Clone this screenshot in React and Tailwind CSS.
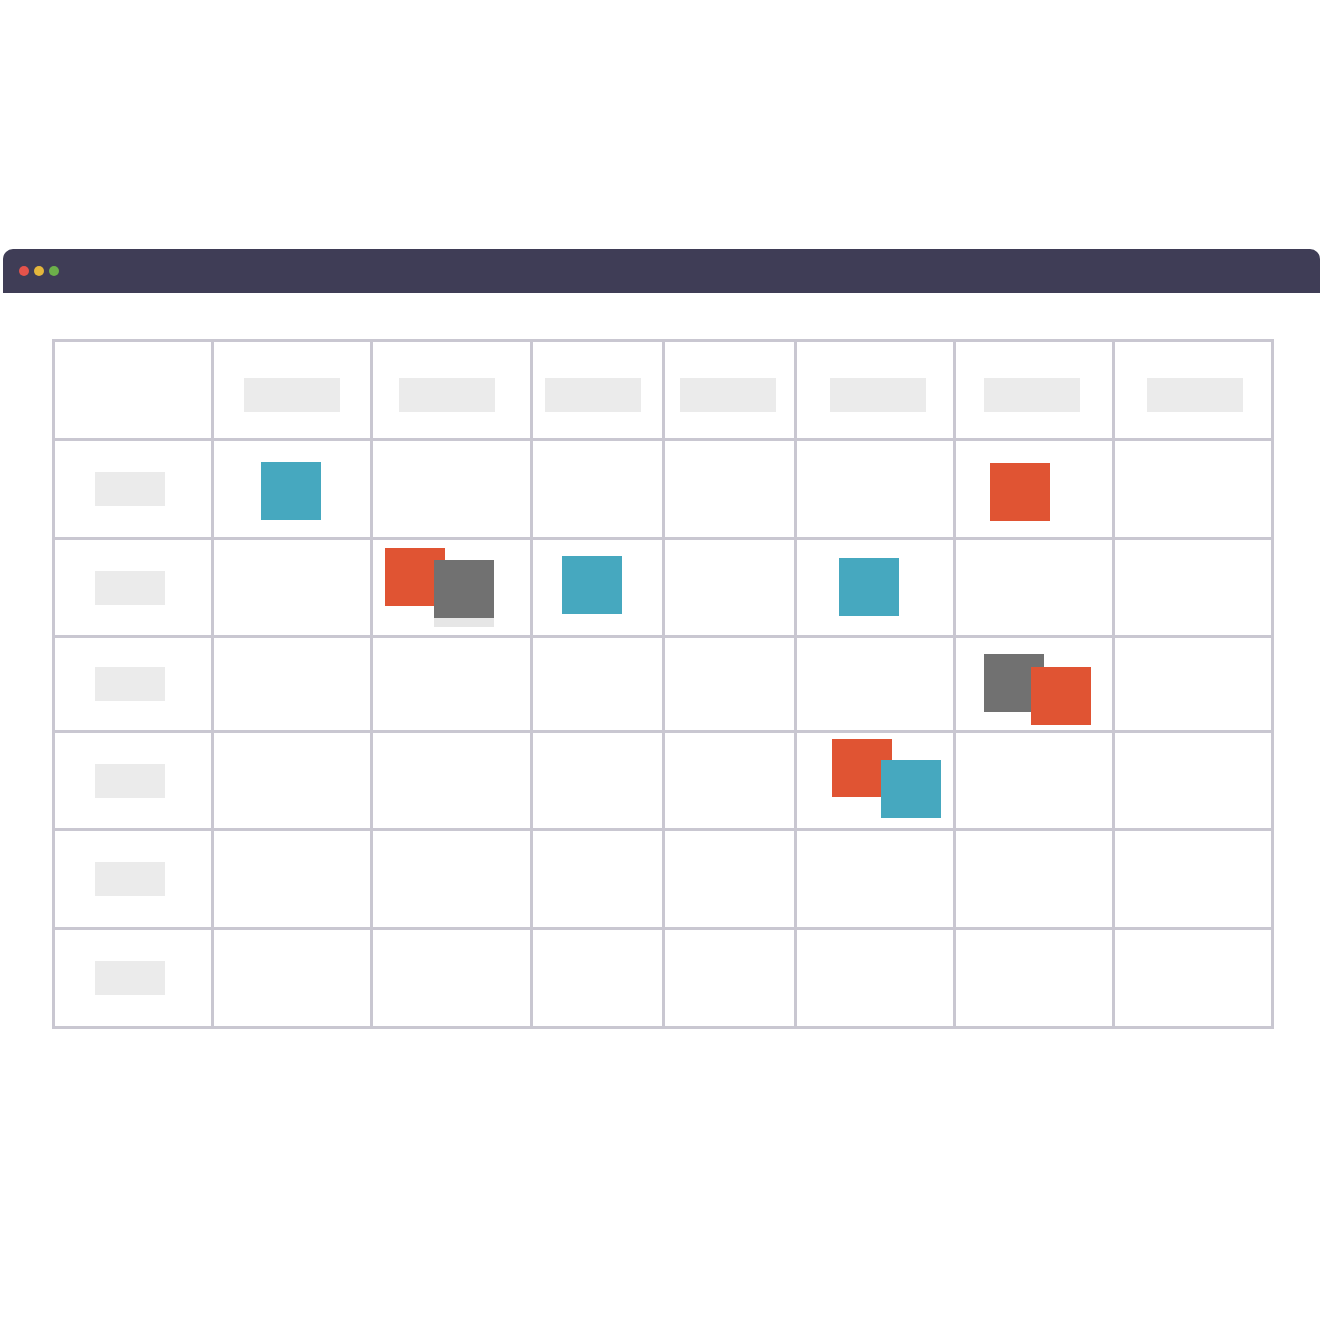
import React from "react";

const cols = [156, 156, 157, 129, 129, 156, 156, 156];
const rows = [96, 96, 95, 92, 95, 96, 96];

// header placeholder offsets per column (col 0 is empty)
const headerOffsets = [null, 30, 26, 12, 15, 33, 28, 32];

const teal = "bg-[#46a8bf]";
const orange = "bg-[#e05433]";
const gray = "bg-[#717171]";

// squares keyed "row-col"
const squares = {
  "1-1": [{ c: teal, l: 47, t: 21 }],
  "1-6": [{ c: orange, l: 34, t: 22 }],
  "2-2": [
    { c: "bg-[#e6e6e6]", l: 61, t: 29 },
    { c: orange, l: 12, t: 8 },
    { c: gray, l: 61, t: 20 },
  ],
  "2-3": [{ c: teal, l: 29, t: 16 }],
  "2-5": [{ c: teal, l: 42, t: 18 }],
  "3-6": [
    { c: gray, l: 28, t: 16 },
    { c: orange, l: 75, t: 29 },
  ],
  "4-5": [
    { c: orange, l: 35, t: 6 },
    { c: teal, l: 84, t: 27 },
  ],
};

const Cell = ({ r, c }) => {
  const items = squares[`${r}-${c}`] || [];
  return (
    <div className="relative bg-white flex items-center">
      {r === 0 && c > 0 && (
        <div
          className="h-[34px] w-[96px] bg-[#ebebeb] self-start mt-[36px]"
          style={{ marginLeft: headerOffsets[c] }}
        />
      )}
      {r > 0 && c === 0 && (
        <div className="h-[34px] w-[70px] bg-[#ebebeb] ml-[40px]" />
      )}
      {items.map((s, i) => (
        <div
          key={i}
          className={`absolute w-[60px] h-[58px] ${s.c}`}
          style={{ left: s.l, top: s.t }}
        />
      ))}
    </div>
  );
};

export default function App() {
  return (
    <div className="w-[1323px] h-[1323px] bg-white pt-[249px]">
      {/* Window bar */}
      <div className="ml-[3px] w-[1317px] h-[44px] bg-[#3f3d56] rounded-t-[10px] flex items-center gap-[5px] pl-[16px]">
        <span className="w-[10px] h-[10px] rounded-full bg-[#e5534b]" />
        <span className="w-[10px] h-[10px] rounded-full bg-[#e4b73c]" />
        <span className="w-[10px] h-[10px] rounded-full bg-[#6cb04a]" />
      </div>

      {/* Calendar grid */}
      <div
        className="ml-[52px] mt-[46px] w-fit grid gap-[3px] p-[3px] bg-[#c9c7d1]"
        style={{
          gridTemplateColumns: cols.map((w) => `${w}px`).join(" "),
          gridTemplateRows: rows.map((h) => `${h}px`).join(" "),
        }}
      >
        {rows.map((_, r) =>
          cols.map((_, c) => <Cell key={`${r}-${c}`} r={r} c={c} />)
        )}
      </div>
    </div>
  );
}
